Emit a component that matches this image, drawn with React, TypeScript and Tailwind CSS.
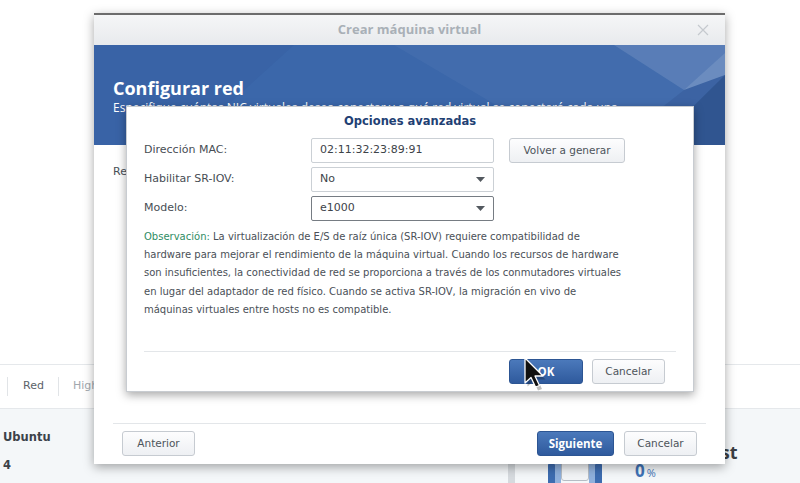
import React from "react";

function Btn({ children, w, primary }: { children: React.ReactNode; w: string; primary?: boolean }) {
  if (primary) {
    return (
      <div
        className={`${w} h-[25px] rounded-[3px] border border-[#2c5593] bg-linear-to-b from-[#4b79bb] to-[#2f5a9d] text-white font-bold text-[11.5px] font-['Open_Sans',sans-serif] flex items-center justify-center`}
      >
        {children}
      </div>
    );
  }
  return (
    <div
      className={`${w} h-[25px] rounded-[3px] border border-[#c6cbd1] bg-linear-to-b from-[#fdfdfe] to-[#eef0f3] text-[#4d545b] text-[10.5px] flex items-center justify-center`}
    >
      {children}
    </div>
  );
}

function Arrow() {
  return (
    <svg width="9" height="6" viewBox="0 0 9 6" className="mr-[8px]">
      <path d="M0 0 L9 0 L4.5 5 Z" fill="#53595f" />
    </svg>
  );
}

export default function App() {
  return (
    <div className="relative w-[800px] h-[483px] overflow-hidden bg-white font-['DejaVu_Sans',sans-serif]">
      {/* background page */}
      <div className="flex flex-col h-full">
        <div className="h-[364px] shrink-0" />
        <div className="h-[45px] shrink-0 border-y border-[#e5e8eb] flex items-center text-[11px]">
          <div className="ml-[7px] w-px h-[19px] bg-[#e1e4e7]" />
          <span className="ml-[15px] text-[#5b6269]">Red</span>
          <div className="ml-[14px] w-px h-[19px] bg-[#e1e4e7]" />
          <span className="ml-[14px] text-[#a2a8ae]">High Availability</span>
        </div>
        <div className="flex-1 min-h-0 overflow-hidden bg-[#f4f7f9] flex">
          <div className="w-[505px] shrink-0 pl-[3px] pt-[20px] text-[11.5px] font-bold text-[#3c4249] leading-[16px]">
            <div>Ubuntu</div>
            <div className="mt-[12px]">4</div>
          </div>
          <div className="shrink-0 ml-[3px] mt-[52px] w-[7px] h-[30px] bg-[#d6dade]" />
          <div className="shrink-0 ml-[33px] mt-[54px] w-[54px] h-[30px] flex">
            <div className="w-[7px] h-full bg-[#3d6cb0] rounded-t-[2px]" />
            <div className="w-[6px] h-full bg-[#8fb0dc]" />
            <div className="w-[28px] h-[20px] mt-[-2px] bg-[#f2f4f6] border border-[#b5bcc4] rounded-[3px]" />
            <div className="w-[6px] h-full bg-[#8fb0dc]" />
            <div className="w-[7px] h-full bg-[#3d6cb0] rounded-t-[2px]" />
          </div>
          <div className="shrink-0 ml-[33px] mt-[51px] h-[22px] leading-[22px] flex items-baseline text-[#3f73b6] font-['Open_Sans',sans-serif]">
            <span className="text-[17px] font-bold">0</span>
            <span className="text-[11px] ml-[2px]">%</span>
          </div>
          <div className="shrink-0 ml-[40px] mt-[30px] h-[26px] text-[18px] font-bold text-[#3a3f44] font-['Open_Sans',sans-serif]">
            Host
          </div>
        </div>
      </div>

      {/* main dialog */}
      <div className="absolute left-[94px] top-[13px] w-[631px] h-[451px] bg-white flex flex-col border-t-2 border-[#6c6c6c] shadow-[0_3px_10px_rgba(0,0,0,0.35)]">
        <div className="h-[30px] shrink-0 bg-linear-to-b from-[#f5f6f7] to-[#e8eaed] grid grid-cols-[1fr_auto_1fr] items-center">
          <div />
          <div className="text-[13px] font-bold text-[#a9b0b7] font-['Open_Sans',sans-serif]">Crear máquina virtual</div>
          <div className="flex justify-end pr-[16px]">
            <svg width="12" height="12" viewBox="0 0 12 12">
              <path d="M1 1 L11 11 M11 1 L1 11" stroke="#c5c9ce" strokeWidth="1.2" />
            </svg>
          </div>
        </div>
        <div className="relative h-[100px] shrink-0 bg-[#3b67aa] overflow-hidden">
          <svg className="absolute inset-0" width="631" height="100" viewBox="0 0 631 100">
            <polygon points="300,0 631,0 631,100 470,100" fill="#ffffff" opacity="0.04" />
            <polygon points="520,0 631,0 631,8 590,45" fill="#ffffff" opacity="0.12" />
            <polygon points="590,45 631,8 631,30" fill="#ffffff" opacity="0.22" />
            <polygon points="631,30 631,100 560,100" fill="#0d2a5c" opacity="0.35" />
            <polygon points="590,45 631,30 560,100 520,100" fill="#0d2a5c" opacity="0.12" />
            <polygon points="0,0 200,0 90,100 0,100" fill="#0d2a5c" opacity="0.05" />
          </svg>
          <div className="relative pl-[19px] pt-[32px] text-white">
            <div className="text-[18px] font-bold leading-[22px] font-['Open_Sans',sans-serif]">Configurar red</div>
            <div className="text-[12px] leading-[14px] mt-[2px] font-['Open_Sans',sans-serif] whitespace-nowrap">
              Especifique cuántas NIC virtuales desea conectar y a qué red virtual se conectará cada una.
            </div>
          </div>
        </div>
        <div className="flex-1 pl-[19px] pt-[20px] text-[11px] text-[#4a5057] leading-[14px]">Re</div>
        <div className="mx-[19px] border-t border-[#e3e6e9]" />
        <div className="flex items-center px-[28px] pt-[7px] pb-[8px]">
          <Btn w="w-[73px]">Anterior</Btn>
          <div className="flex-1" />
          <Btn w="w-[77px]" primary>Siguiente</Btn>
          <div className="w-[10px]" />
          <Btn w="w-[73px]">Cancelar</Btn>
        </div>
      </div>

      {/* advanced options dialog */}
      <div className="absolute left-[126px] top-[106px] w-[568px] h-[286px] bg-white border border-[#c8ccd1] flex flex-col shadow-[0_3px_9px_rgba(0,0,0,0.35)]">
        <div className="h-[29px] shrink-0 flex items-center justify-center text-[11.5px] font-bold text-[#1f4174]">
          Opciones avanzadas
        </div>
        <div className="mt-[2px] px-[17px] grid grid-cols-[152px_183px_auto] gap-y-[4px] gap-x-[15px] text-[11px] text-[#474d54]">
          <div className="h-[25px] flex items-center">Dirección MAC:</div>
          <div className="h-[25px] border border-[#cbd0d5] rounded-[2px] flex items-center pl-[8px] text-[#3d4349]">
            02:11:32:23:89:91
          </div>
          <div className="flex">
            <Btn w="w-[116px]">Volver a generar</Btn>
          </div>

          <div className="h-[25px] flex items-center">Habilitar SR-IOV:</div>
          <div className="h-[25px] border border-[#cbd0d5] rounded-[2px] flex items-center justify-between pl-[8px] text-[#3d4349]">
            <span>No</span>
            <Arrow />
          </div>
          <div />

          <div className="h-[25px] flex items-center">Modelo:</div>
          <div className="h-[25px] border border-[#767c83] rounded-[2px] flex items-center justify-between pl-[8px] text-[#3d4349]">
            <span>e1000</span>
            <Arrow />
          </div>
          <div />
        </div>
        <div className="mt-[7px] px-[17px] text-[10px] leading-[18.2px] text-[#4a5057] whitespace-nowrap">
          <div>
            <span className="text-[#2f8d64]">Observación:</span> La virtualización de E/S de raíz única (SR-IOV) requiere compatibilidad de
          </div>
          <div>hardware para mejorar el rendimiento de la máquina virtual. Cuando los recursos de hardware</div>
          <div>son insuficientes, la conectividad de red se proporciona a través de los conmutadores virtuales</div>
          <div>en lugar del adaptador de red físico. Cuando se activa SR-IOV, la migración en vivo de</div>
          <div>máquinas virtuales entre hosts no es compatible.</div>
        </div>
        <div className="flex-1" />
        <div className="mx-[17px] border-t border-[#e3e6e9]" />
        <div className="flex justify-end items-center pr-[28px] pt-[7px] pb-[7px]">
          <Btn w="w-[74px]" primary>OK</Btn>
          <div className="w-[9px]" />
          <Btn w="w-[73px]">Cancelar</Btn>
        </div>
      </div>

      {/* mouse cursor */}
      <svg className="absolute left-[523px] top-[356px]" width="26" height="36" viewBox="0 0 26 36">
        <path d="M3 4 L3 29 L9 23.5 L13.5 33 L17.5 31.5 L13 22 L21 22 Z" fill="rgba(0,0,0,0.25)" transform="translate(1.5,1.5)" />
        <path d="M2 2 L2 27 L8 21.5 L12.5 31 L16.5 29.5 L12 20 L20 20 Z" fill="#111" stroke="#fff" strokeWidth="1.3" strokeLinejoin="round" />
      </svg>
    </div>
  );
}
